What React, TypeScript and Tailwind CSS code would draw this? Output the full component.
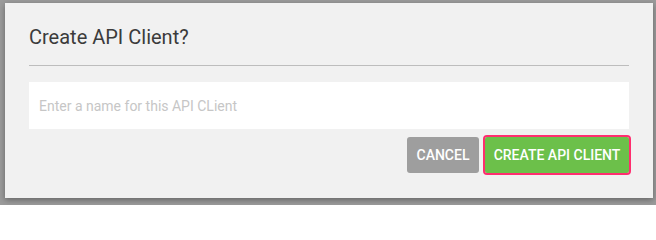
const CreateApiClientDialog = () => {
  return (
    <div className="w-[656px] h-[205px] bg-[#9b9b9b] pt-[3px] pl-[5px] font-['Roboto',sans-serif]">
      <div className="w-[648px] h-[195px] bg-[#f1f1f1] px-6 pt-5 shadow-[0_2px_6px_rgba(0,0,0,0.35)]">
        <div className="border-b border-[#bdbdbd] pb-[14px]">
          <h2 className="text-[20px] leading-[28px] text-[#3b3b3b]">Create API Client?</h2>
        </div>
        <input
          type="text"
          placeholder="Enter a name for this API CLient"
          className="mt-4 w-full h-[47px] bg-white px-[10px] text-sm text-[#333] placeholder:text-[#c6c6c6] outline-none"
        />
        <div className="mt-2 flex justify-end items-center gap-[6px]">
          <button className="h-9 w-[72px] rounded-[3px] bg-[#9e9e9e] text-sm font-medium text-white uppercase whitespace-nowrap">
            Cancel
          </button>
          <button className="h-9 w-[144px] rounded-[2px] bg-[#6cc04a] text-sm font-medium text-white uppercase whitespace-nowrap outline-2 outline-[#ff2d6f]">
            Create API Client
          </button>
        </div>
      </div>
    </div>
  );
};

export default function App() {
  return <CreateApiClientDialog />;
}
